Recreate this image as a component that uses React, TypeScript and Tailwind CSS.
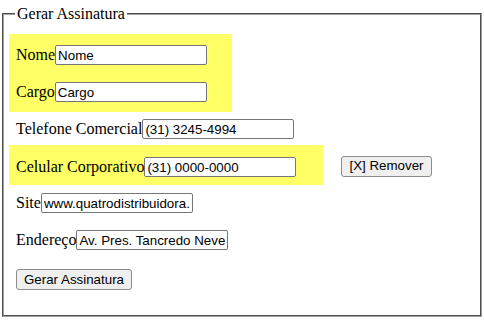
import React from 'react'

const inputCls =
  "h-[20px] w-[152px] border border-[#767676] rounded-[2px] bg-white px-[2px] font-['Liberation_Sans',Arial,sans-serif] text-[13.33px] text-black"
const buttonCls =
  "h-[21px] border border-[#8c8c8c] rounded-[3px] bg-[#efefef] font-['Liberation_Sans',Arial,sans-serif] text-[13.33px] text-black leading-none"

function Field({ label, value }: { label: string; value: string }) {
  return (
    <div className="flex items-center h-[20px]">
      <label>{label}</label>
      <input type="text" defaultValue={value} className={inputCls} />
    </div>
  )
}

export default function App() {
  return (
    <div className="w-[484px] h-[320px] bg-white pt-[5px] font-['Liberation_Serif','Times_New_Roman',serif] text-[16px] text-black">
      <fieldset className="mx-[2px] border-2 [border-style:groove] border-[#a0a0a0] pl-[5px] pr-[5px] pt-[11px] pb-[24px]">
        <legend className="ml-[6px] px-[2px] leading-[18px]">Gerar Assinatura</legend>

        <div className="flex flex-col">
          <div className="w-[223px] bg-[#ffff66] pl-[7px] pt-[11px] pb-[10px] flex flex-col gap-[17px]">
            <Field label="Nome" value="Nome" />
            <Field label="Cargo" value="Cargo" />
          </div>

          <div className="mt-[7px] pl-[7px]">
            <Field label="Telefone Comercial" value="(31) 3245-4994" />
          </div>

          <div className="mt-[6px] flex items-center">
            <div className="w-[314px] bg-[#ffff66] pl-[7px] pt-[12px] pb-[8px]">
              <Field label="Celular Corporativo" value="(31) 0000-0000" />
            </div>
            <button className={buttonCls + ' ml-[18px] w-[91px] mt-[2px]'}>[X] Remover</button>
          </div>

          <div className="mt-[8px] pl-[7px]">
            <Field label="Site" value="www.quatrodistribuidora.com.br" />
          </div>

          <div className="mt-[17px] pl-[7px]">
            <Field label="Endereço" value="Av. Pres. Tancredo Neves, 1234" />
          </div>

          <div className="mt-[17px] pl-[7px]">
            <button className={buttonCls + ' w-[116px]'}>Gerar Assinatura</button>
          </div>
        </div>
      </fieldset>
    </div>
  )
}
